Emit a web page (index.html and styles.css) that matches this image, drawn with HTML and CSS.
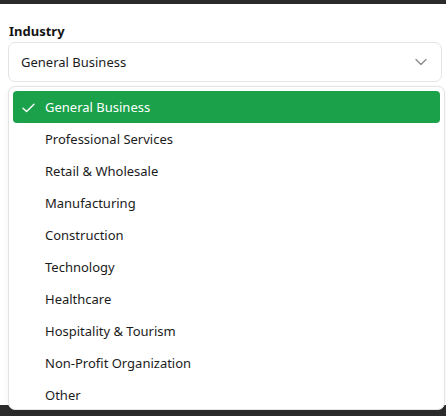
FILE: index.html
```html
<!DOCTYPE html>
<html lang="en">
<head>
<meta charset="utf-8">
<title>Industry</title>
<link rel="stylesheet" href="styles.css">
</head>
<body>
<div class="page">
  <div class="field">
    <label class="label">Industry</label>
    <div class="select">
      <span class="value">General Business</span>
      <svg class="chevron" width="12" height="8" viewBox="0 0 12 8"><path d="M1 1.5 L6 6.5 L11 1.5" fill="none" stroke="#8a8a8a" stroke-width="1.3" stroke-linecap="round" stroke-linejoin="round"/></svg>
    </div>
  </div>
</div>
<ul class="menu">
  <li class="item selected">
    <svg class="check" width="13" height="10" viewBox="0 0 13 10"><path d="M1 5.2 L4.6 8.6 L12 1.2" fill="none" stroke="#ffffff" stroke-width="1.4" stroke-linecap="round" stroke-linejoin="round"/></svg>
    General Business
  </li>
  <li class="item">Professional Services</li>
  <li class="item">Retail &amp; Wholesale</li>
  <li class="item">Manufacturing</li>
  <li class="item">Construction</li>
  <li class="item">Technology</li>
  <li class="item">Healthcare</li>
  <li class="item">Hospitality &amp; Tourism</li>
  <li class="item">Non-Profit Organization</li>
  <li class="item">Other</li>
</ul>
</body>
</html>
```

FILE: styles.css
```css
html, body {
  margin: 0;
  height: 100%;
}
body {
  background: #2b2b2b;
  padding-top: 4px;
  box-sizing: border-box;
  font-family: "Noto Sans", "Open Sans", sans-serif;
  font-size: 13px;
  color: #1c1c1c;
  position: relative;
  overflow: hidden;
}
.page {
  background: #ffffff;
  height: 401px;
  box-sizing: border-box;
  padding: 17px 4px 0 8px;
}
.field {
  display: flex;
  flex-direction: column;
  gap: 1px;
}
.label {
  font-weight: 700;
  line-height: 20px;
  padding-left: 1px;
  color: #141414;
}
.select {
  height: 40px;
  box-sizing: border-box;
  border: 1px solid #e4e4e4;
  border-radius: 7px;
  display: flex;
  align-items: center;
  justify-content: space-between;
  padding: 0 14px 0 12px;
}
.chevron {
  display: block;
}
.menu {
  position: absolute;
  top: 86px;
  left: 8px;
  right: 1px;
  height: 324px;
  margin: 0;
  padding: 4px;
  list-style: none;
  box-sizing: border-box;
  background: #ffffff;
  border: 1px solid #e4e4e4;
  border-radius: 7px;
  overflow: hidden;
  box-shadow: 0 2px 6px rgba(0, 0, 0, 0.06);
}
.item {
  height: 32px;
  display: flex;
  align-items: center;
  padding-left: 32px;
  border-radius: 4px;
  position: relative;
}
.item.selected {
  background: #1aa14a;
  color: #ffffff;
}
.check {
  position: absolute;
  left: 9px;
  top: 12px;
}
```
